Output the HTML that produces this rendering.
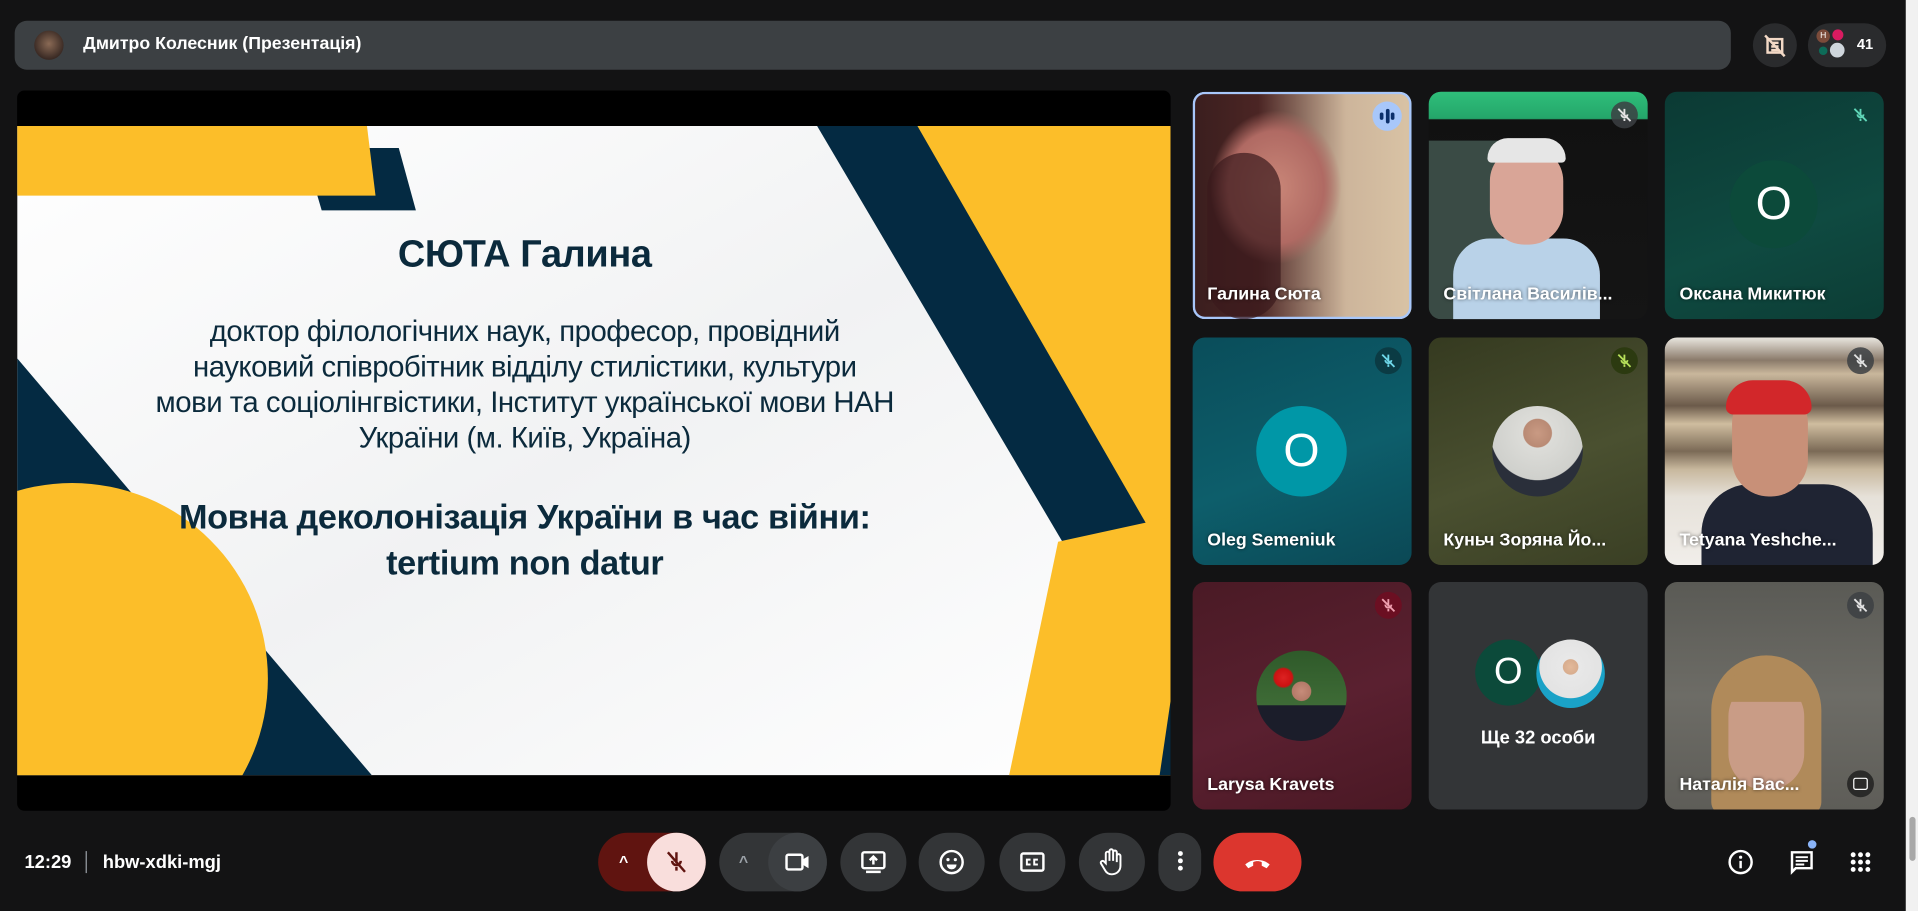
<!DOCTYPE html>
<html><head><meta charset="utf-8"><style>
html,body{margin:0;padding:0;background:#131314;overflow:hidden;width:1918px;height:911px}
#w{position:absolute;left:0;top:0;width:1568px;height:745px;transform:scale(1.22321,1.22282);transform-origin:0 0;font-family:"Liberation Sans",sans-serif;color:#fff}
.a{position:absolute}
.tile{position:absolute;width:179px;height:186px;border-radius:10px;overflow:hidden}
.nm{position:absolute;left:12px;bottom:12px;font-size:14.5px;font-weight:bold;color:#fff;text-shadow:0 0 3px rgba(0,0,0,.6);white-space:nowrap}
.mic{position:absolute;right:8px;top:8px;width:22px;height:22px;border-radius:50%;background:rgba(60,64,67,.85)}
.mic svg{position:absolute;left:4px;top:4px}
.av{position:absolute;border-radius:50%;display:flex;align-items:center;justify-content:center;font-size:38px;color:#fff}
.btn{position:absolute;top:681px;height:48px;border-radius:24px;background:#333537}
</style></head><body><div id="w">
<div class="a" style="left:12px;top:17px;width:1403px;height:40px;border-radius:10px;background:#3c4043"></div>
<div class="a" style="left:28px;top:25px;width:24px;height:24px;border-radius:50%;background:radial-gradient(circle at 50% 45%,#8a6a55,#3a2a24 70%)"></div>
<div class="a" style="left:68px;top:28px;font-size:14.5px;font-weight:bold">Дмитро Колесник (Презентація)</div>
<div class="a" style="left:1433px;top:19px;width:36px;height:36px;border-radius:18px;background:#2a2b2d"></div>
<svg class="a" style="left:1440px;top:26px" width="22" height="22" viewBox="0 0 22 22"><rect x="5" y="6" width="12" height="11" fill="none" stroke="#f3d9c6" stroke-width="2"/><path d="M8 9h6M8 12h6M8 15h6M3 3l16 17" stroke="#f3d9c6" stroke-width="2"/></svg>
<div class="a" style="left:1478px;top:19px;width:64px;height:36px;border-radius:18px;background:#2a2b2d"></div>
<div class="a" style="left:1485px;top:24px;width:11px;height:11px;border-radius:50%;background:#7b4b3a;font-size:7px;text-align:center;line-height:11px">Н</div>
<div class="a" style="left:1498px;top:24px;width:9px;height:9px;border-radius:50%;background:#d81b60"></div>
<div class="a" style="left:1487px;top:38px;width:7px;height:7px;border-radius:50%;background:#0d6b58"></div>
<div class="a" style="left:1496px;top:35px;width:12px;height:12px;border-radius:50%;background:#cfd6dc"></div>
<div class="a" style="left:1518px;top:29px;font-size:12px;font-weight:bold">41</div>

<div class="a" style="left:14px;top:74px;width:943px;height:589px;background:#000;border-radius:6px;overflow:hidden">
 <svg class="a" style="left:0;top:29px" width="943" height="531" viewBox="0 0 943 531">
  <defs><linearGradient id="g" x1="0" y1="0" x2="1" y2="1"><stop offset="0" stop-color="#ffffff"/><stop offset=".5" stop-color="#f1f2f3"/><stop offset="1" stop-color="#ffffff"/></linearGradient></defs>
  <rect width="943" height="531" fill="url(#g)"/>
  <polygon points="0,190 290,531 0,531" fill="#042a42"/>
  <circle cx="45" cy="452" r="160" fill="#fcbe29"/>
  <polygon points="234,18 312,18 326,69 249,69" fill="#042a42"/>
  <polygon points="0,0 286,0 293,57 0,57" fill="#fcbe29"/>
  <polygon points="654,0 943,0 943,490" fill="#042a42"/>
  <polygon points="736,0 943,0 943,360" fill="#fcbe29"/>
  <polygon points="851,340 943,320 943,531 811,531" fill="#fcbe29"/>
  <polygon points="943,470 943,531 934,531" fill="#042a42"/>
 </svg>
 <div class="a" style="left:0;width:830px;top:116px;text-align:center;color:#0b2a3c;font-size:31px;font-weight:bold;letter-spacing:-0.3px">СЮТА Галина</div>
 <div class="a" style="left:0;width:830px;top:183px;text-align:center;color:#0b2a3c;font-size:24px;line-height:29px;letter-spacing:-0.4px;white-space:nowrap">доктор філологічних наук, професор, провідний<br>науковий співробітник відділу стилістики, культури<br>мови та соціолінгвістики, Інститут української мови НАН<br>України (м. Київ, Україна)</div>
 <div class="a" style="left:0;width:830px;top:330px;text-align:center;color:#0b2a3c;font-size:28px;line-height:38px;font-weight:bold;letter-spacing:-0.3px;white-space:nowrap">Мовна деколонізація України в час війни:<br>tertium non datur</div>
</div>

<div class="tile" style="left:975px;top:75px;background:radial-gradient(ellipse 40% 45% at 38% 42%,#c98678 0,#b06a63 55%,transparent 75%),linear-gradient(90deg,#3a1e1e 0,#4b2524 30%,#cdb59b 70%,#d9c3a5);box-shadow:inset 0 0 0 2px #a8c7fa"><div class="a" style="left:12px;top:50px;width:60px;height:136px;background:#3a1a1c;border-radius:30px;opacity:.7"></div><div class="a" style="right:8px;top:8px;width:24px;height:24px;border-radius:50%;background:#a8c7fa"><div class="a" style="left:6px;top:9px;width:3px;height:6px;background:#0b2f6b;border-radius:2px"></div><div class="a" style="left:10.5px;top:6px;width:3px;height:12px;background:#0b2f6b;border-radius:2px"></div><div class="a" style="left:15px;top:9px;width:3px;height:6px;background:#0b2f6b;border-radius:2px"></div></div><div class="nm">Галина Сюта</div></div>

<div class="tile" style="left:1168px;top:75px;background:linear-gradient(180deg,#2fbf7a 0,#24a56a 22px,#111 23px,#151515)"><div class="a" style="left:0;top:40px;width:60px;height:146px;background:#3a4b45"></div><div class="a" style="left:20px;top:120px;width:120px;height:70px;background:#b9d2e8;border-radius:30px 30px 0 0"></div><div class="a" style="left:50px;top:45px;width:60px;height:80px;background:#d9a597;border-radius:28px"></div><div class="a" style="left:48px;top:38px;width:64px;height:20px;background:#e6e6e6;border-radius:20px 20px 4px 4px"></div><div class="mic"><svg width="14" height="14" viewBox="0 0 14 14"><path d="M7 2v6M4.5 6.5a2.5 2.5 0 005 0M7 10v2M2 2l10 10" stroke="#e3e3e3" stroke-width="1.5" fill="none"/></svg></div><div class="nm">Світлана Василів...</div></div>

<div class="tile" style="left:1361px;top:75px;background:linear-gradient(160deg,#0b3a34,#0f4a41 60%,#0c3d35)"><div class="av" style="left:53px;top:56px;width:72px;height:72px;background:#0c4a3a">O</div><div class="mic" style="background:transparent"><svg width="14" height="14" viewBox="0 0 14 14"><path d="M7 2v6M4.5 6.5a2.5 2.5 0 005 0M7 10v2M2 2l10 10" stroke="#5fd6b8" stroke-width="1.5" fill="none"/></svg></div><div class="nm">Оксана Микитюк</div></div>

<div class="tile" style="left:975px;top:276px;background:linear-gradient(160deg,#0a4d5a,#0d5e6b 55%,#0b4855)"><div class="av" style="left:52px;top:56px;width:74px;height:74px;background:#0097a7">O</div><div class="mic" style="background:#0b3b44"><svg width="14" height="14" viewBox="0 0 14 14"><path d="M7 2v6M4.5 6.5a2.5 2.5 0 005 0M7 10v2M2 2l10 10" stroke="#6fd8ea" stroke-width="1.5" fill="none"/></svg></div><div class="nm">Oleg Semeniuk</div></div>

<div class="tile" style="left:1168px;top:276px;background:linear-gradient(160deg,#353a20,#4a5030 55%,#3a3f24)"><div class="av" style="left:52px;top:56px;width:74px;height:74px;background:radial-gradient(circle at 50% 30%,#c99a83 0,#b98a74 18%,#dcdcd8 19%,#cfd0cc 60%,#2a2f3a 61%)"></div><div class="mic" style="background:#2c3a10"><svg width="14" height="14" viewBox="0 0 14 14"><path d="M7 2v6M4.5 6.5a2.5 2.5 0 005 0M7 10v2M2 2l10 10" stroke="#b7e05a" stroke-width="1.5" fill="none"/></svg></div><div class="nm">Куньч Зоряна Йо...</div></div>

<div class="tile" style="left:1361px;top:276px;background:linear-gradient(180deg,#e9e6df 0,#8a7a6a 10%,#c9b79c 16%,#6b5a4a 30%,#cfbd9f 38%,#7b6a56 50%,#c8b89e 58%,#e6e1d9 70%,#f1eeea)"><div class="a" style="left:30px;top:120px;width:140px;height:70px;background:#1f2433;border-radius:40px 40px 0 0"></div><div class="a" style="left:55px;top:40px;width:62px;height:90px;background:#c89078;border-radius:30px"></div><div class="a" style="left:50px;top:35px;width:70px;height:28px;background:#d2272a;border-radius:30px 30px 8px 8px"></div><div class="mic"><svg width="14" height="14" viewBox="0 0 14 14"><path d="M7 2v6M4.5 6.5a2.5 2.5 0 005 0M7 10v2M2 2l10 10" stroke="#e3e3e3" stroke-width="1.5" fill="none"/></svg></div><div class="nm">Tetyana Yeshche...</div></div>

<div class="tile" style="left:975px;top:476px;background:linear-gradient(160deg,#4a1a25,#5a2030 55%,#4a1824)"><div class="av" style="left:52px;top:56px;width:74px;height:74px;background:radial-gradient(circle at 50% 45%,#c78c7a 0,#b47a68 14%,transparent 15%),radial-gradient(circle at 30% 30%,#d22 0,#c11 10%,transparent 12%),linear-gradient(#2f5a2a,#3e6b36 60%,#1b1d2a 61%)"></div><div class="mic" style="background:#6b0f22"><svg width="14" height="14" viewBox="0 0 14 14"><path d="M7 2v6M4.5 6.5a2.5 2.5 0 005 0M7 10v2M2 2l10 10" stroke="#f0a0b0" stroke-width="1.5" fill="none"/></svg></div><div class="nm">Larysa Kravets</div></div>

<div class="tile" style="left:1168px;top:476px;background:#333537"><div class="av" style="left:38px;top:47px;width:54px;height:54px;background:#0c4a3a;font-size:30px">O</div><div class="av" style="left:88px;top:47px;width:56px;height:56px;background:radial-gradient(circle at 50% 40%,#e3b99a 0,#d8ad8e 14%,#e8e8e8 15%,#e3e3e3 58%,#1aa2c7 59%)"></div><div class="a" style="left:0;width:179px;top:119px;text-align:center;font-size:15px;font-weight:bold">Ще 32 особи</div></div>

<div class="tile" style="left:1361px;top:476px;background:linear-gradient(180deg,#5a5a55,#6d6c66 50%,#5e5d58)"><div class="a" style="left:38px;top:60px;width:90px;height:130px;background:#b08a5a;border-radius:45px 45px 10px 10px"></div><div class="a" style="left:52px;top:80px;width:62px;height:90px;background:#c99c86;border-radius:30px"></div><div class="a" style="left:50px;top:70px;width:66px;height:28px;background:#b08a5a;border-radius:30px 30px 6px 6px"></div><div class="mic"><svg width="14" height="14" viewBox="0 0 14 14"><path d="M7 2v6M4.5 6.5a2.5 2.5 0 005 0M7 10v2M2 2l10 10" stroke="#e3e3e3" stroke-width="1.5" fill="none"/></svg></div><div class="a" style="right:8px;bottom:10px;width:22px;height:22px;border-radius:50%;background:rgba(20,20,20,.7)"><div class="a" style="left:5px;top:6px;width:10px;height:8px;border:1.5px solid #fff;border-radius:2px"></div></div><div class="nm">Наталія Вас...</div></div>

<div class="a" style="left:20px;top:697px;font-size:15px;font-weight:bold">12:29</div>
<div class="a" style="left:70px;top:696px;width:1px;height:18px;background:#9aa0a6"></div>
<div class="a" style="left:84px;top:697px;font-size:15px;font-weight:bold">hbw-xdki-mgj</div>

<div class="btn" style="left:489px;width:88px;background:#601410"></div>
<div class="btn" style="left:529px;width:48px;background:#f9dedc"></div>
<div class="a" style="left:506px;top:697px;color:#fff;font-size:13px;font-weight:bold">^</div>
<svg class="a" style="left:542px;top:694px" width="22" height="22" viewBox="0 0 22 22"><path d="M11 3v9M7.5 10a3.5 3.5 0 007 0M11 15v3M4 3l14 16" stroke="#601410" stroke-width="2" fill="none"/></svg>
<div class="btn" style="left:588px;width:88px"></div>
<div class="btn" style="left:628px;width:48px;background:#3c3f42"></div>
<div class="a" style="left:604px;top:697px;color:#9aa0a6;font-size:13px;font-weight:bold">^</div>
<svg class="a" style="left:641px;top:694px" width="22" height="22" viewBox="0 0 22 22"><rect x="2" y="5" width="13" height="12" rx="1.5" fill="none" stroke="#fff" stroke-width="2"/><path d="M15 9l5-3v10l-5-3z" fill="#fff"/></svg>
<div class="btn" style="left:687px;width:54px"></div>
<svg class="a" style="left:703px;top:694px" width="22" height="22" viewBox="0 0 22 22"><rect x="2" y="3" width="18" height="13" rx="1.5" fill="none" stroke="#fff" stroke-width="2"/><path d="M11 13V7M8 9.5l3-3 3 3M5 19h12" stroke="#fff" stroke-width="2" fill="none"/></svg>
<div class="btn" style="left:751px;width:54px"></div>
<svg class="a" style="left:767px;top:694px" width="22" height="22" viewBox="0 0 22 22"><circle cx="11" cy="11" r="9" fill="none" stroke="#fff" stroke-width="2"/><circle cx="8" cy="9" r="1.3" fill="#fff"/><circle cx="14" cy="9" r="1.3" fill="#fff"/><path d="M7 13h8a4 4 0 01-8 0z" fill="#fff"/></svg>
<div class="btn" style="left:817px;width:54px"></div>
<svg class="a" style="left:833px;top:694px" width="22" height="22" viewBox="0 0 22 22"><rect x="2" y="4" width="18" height="14" rx="1.5" fill="none" stroke="#fff" stroke-width="2"/><path d="M9.5 9h-3v4h3M15.5 9h-3v4h3" stroke="#fff" stroke-width="1.6" fill="none"/></svg>
<div class="btn" style="left:882px;width:54px"></div>
<svg class="a" style="left:898px;top:693px" width="22" height="24" viewBox="0 0 22 24"><path d="M6 13V5a1.5 1.5 0 013 0v6V3a1.5 1.5 0 013 0v8V4a1.5 1.5 0 013 0v8V7a1.5 1.5 0 013 0v8c0 4-3 7-7 7-3 0-5-2-6-4l-3-5a1.5 1.5 0 012.5-1.5z" fill="none" stroke="#fff" stroke-width="1.6"/></svg>
<div class="btn" style="left:947px;width:35px"></div>
<div class="a" style="left:963px;top:696px;width:4px;height:4px;border-radius:50%;background:#fff;box-shadow:0 6px #fff,0 12px #fff"></div>
<div class="btn" style="left:992px;width:72px;background:#dc362e"></div>
<svg class="a" style="left:1016px;top:697px" width="24" height="16" viewBox="0 0 24 16"><path d="M2 10c5-5 15-5 20 0l-2.5 3-4-2V8c-2.5-1-4.5-1-7 0v3l-4 2z" fill="#fff"/></svg>

<svg class="a" style="left:1412px;top:694px" width="22" height="22" viewBox="0 0 22 22"><circle cx="11" cy="11" r="9" fill="none" stroke="#fff" stroke-width="2"/><path d="M11 10v6" stroke="#fff" stroke-width="2"/><circle cx="11" cy="7" r="1.3" fill="#fff"/></svg>
<svg class="a" style="left:1462px;top:694px" width="22" height="22" viewBox="0 0 22 22"><path d="M3 3h16v13H6l-3 3z" fill="none" stroke="#fff" stroke-width="2"/><path d="M6 7h10M6 10h10M6 13h7" stroke="#fff" stroke-width="1.6"/></svg>
<div class="a" style="left:1478px;top:687px;width:7px;height:7px;border-radius:50%;background:#8ab4f8"></div>
<svg class="a" style="left:1512px;top:696px" width="18" height="18" viewBox="0 0 18 18" fill="#fff"><circle cx="3" cy="3" r="2"/><circle cx="9" cy="3" r="2"/><circle cx="15" cy="3" r="2"/><circle cx="3" cy="9" r="2"/><circle cx="9" cy="9" r="2"/><circle cx="15" cy="9" r="2"/><circle cx="3" cy="15" r="2"/><circle cx="9" cy="15" r="2"/><circle cx="15" cy="15" r="2"/></svg>
<div class="a" style="left:1558px;top:0;width:10px;height:745px;background:#f1f1f1"></div>
<div class="a" style="left:1561px;top:668px;width:5px;height:36px;border-radius:3px;background:#a8a8a8"></div>
</div></body></html>
